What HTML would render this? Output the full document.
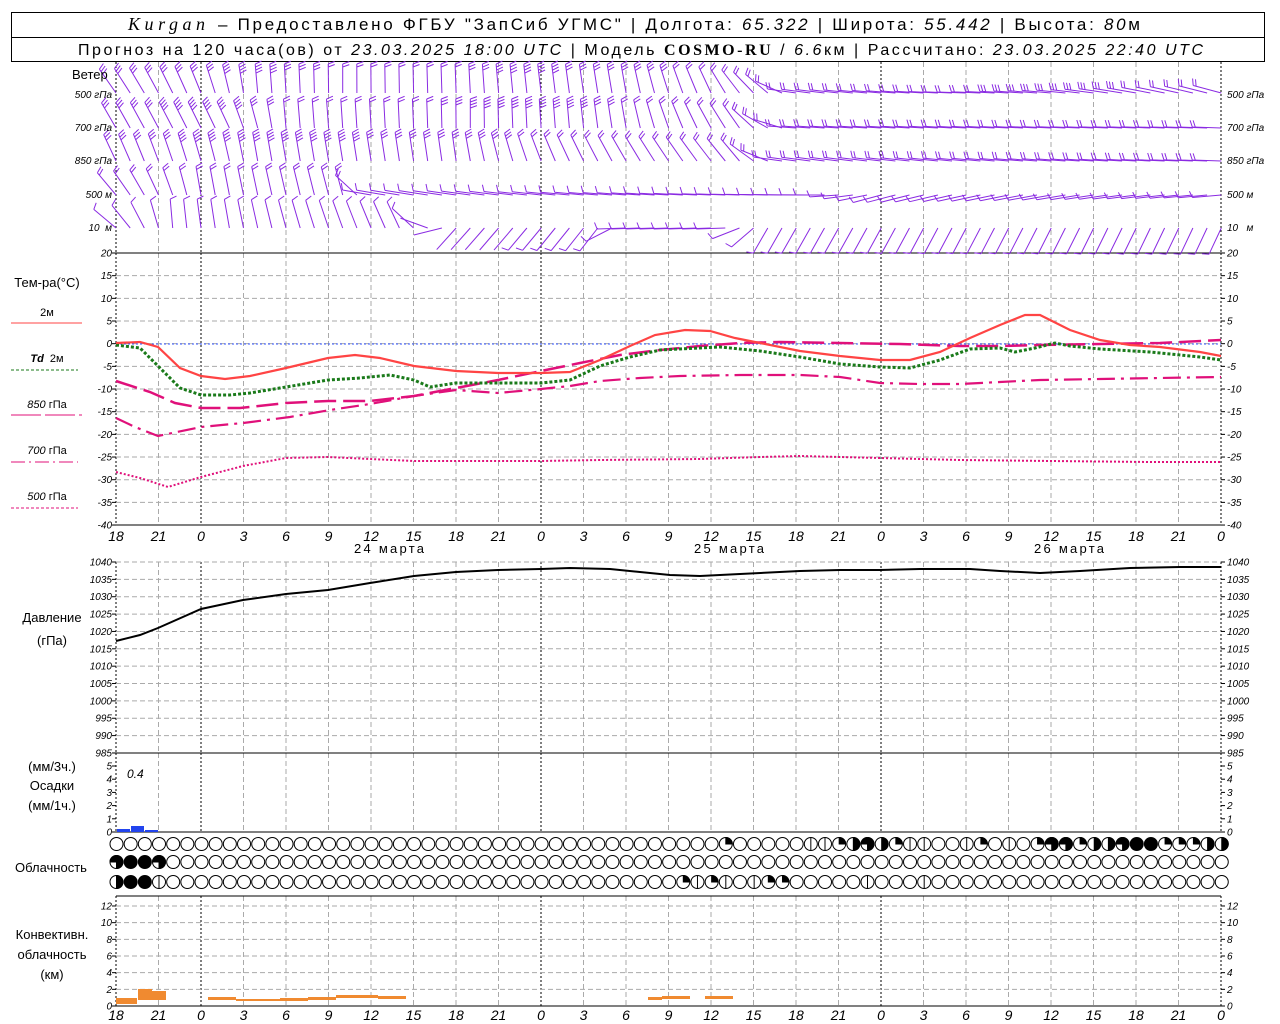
<!DOCTYPE html>
<html><head><meta charset="utf-8"><style>
html,body{margin:0;padding:0;background:#fff;width:1280px;height:1024px;overflow:hidden}
svg{display:block}
text{font-family:"Liberation Sans","DejaVu Sans",sans-serif;fill:#000}
.t{font-size:10px;font-style:italic}
.l{font-size:13px}
</style></head><body>
<svg id="s" width="1280" height="1024" viewBox="0 0 1280 1024" xmlns="http://www.w3.org/2000/svg">
<rect x="11.5" y="12.5" width="1253" height="49" fill="none" stroke="#000"/>
<line x1="11" y1="37.5" x2="1265" y2="37.5" stroke="#000"/>
<text x="128" y="30" style="font-size:18px;font-family:'Liberation Serif',serif;font-style:italic" textLength="77" lengthAdjust="spacing">Kurgan</text>
<text x="218" y="30" style="font-size:17px" textLength="922" lengthAdjust="spacing">– Предоставлено ФГБУ "ЗапСиб УГМС" | Долгота: <tspan font-style="italic">65.322</tspan> | Широта: <tspan font-style="italic">55.442</tspan> | Высота: <tspan font-style="italic">80</tspan>м</text>
<text x="78" y="55" style="font-size:16px" textLength="1125" lengthAdjust="spacing">Прогноз на 120 часа(ов) от <tspan font-style="italic">23.03.2025 18:00 UTC</tspan>  | Модель <tspan style="font-family:'Liberation Serif',serif;font-weight:bold">COSMO-RU</tspan> / <tspan font-style="italic">6.6</tspan>км | Рассчитано: <tspan font-style="italic">23.03.2025 22:40 UTC</tspan></text>
<g id="grid"></g>
<g id="wind" stroke="#8a2be2" stroke-width="1" fill="none"></g>
<text x="72" y="79" class="l">Ветер</text>
<g>
<text x="112" y="98" text-anchor="end" class="t">500 гПа</text>
<text x="112" y="131" text-anchor="end" class="t">700 гПа</text>
<text x="112" y="164" text-anchor="end" class="t">850 гПа</text>
<text x="112" y="198" text-anchor="end" class="t">500 м</text>
<text x="112" y="231" text-anchor="end" class="t">10 &#160;м</text>
<text x="1227" y="98" class="t">500 гПа</text>
<text x="1227" y="131" class="t">700 гПа</text>
<text x="1227" y="164" class="t">850 гПа</text>
<text x="1227" y="198" class="t">500 м</text>
<text x="1227" y="231" class="t">10 &#160; м</text>
</g>
<text x="47" y="287" class="l" text-anchor="middle">Тем-ра(°C)</text>
<text x="47" y="316" class="t" text-anchor="middle" style="font-style:normal;font-size:11px">2м</text>
<line x1="11" y1="323" x2="82" y2="323" stroke="#f44"/>
<text x="47" y="362" class="t" text-anchor="middle" style="font-size:11px"><tspan font-weight="bold">Td</tspan> <tspan font-style="normal">&#160;2м</tspan></text>
<line x1="11" y1="370" x2="78" y2="370" stroke="#1a7a1a" stroke-dasharray="3,2"/>
<text x="47" y="408" class="t" text-anchor="middle" style="font-size:11px">850 <tspan font-style="normal">гПа</tspan></text>
<line x1="11" y1="415" x2="82" y2="415" stroke="#e0107a" stroke-dasharray="30,4"/>
<text x="47" y="454" class="t" text-anchor="middle" style="font-size:11px">700 <tspan font-style="normal">гПа</tspan></text>
<line x1="11" y1="462" x2="78" y2="462" stroke="#e0107a" stroke-dasharray="14,4,2,4"/>
<text x="47" y="500" class="t" text-anchor="middle" style="font-size:11px">500 <tspan font-style="normal">гПа</tspan></text>
<line x1="11" y1="508" x2="78" y2="508" stroke="#e0107a" stroke-dasharray="3,2"/>
<text x="52" y="622" class="l" text-anchor="middle">Давление</text>
<text x="52" y="645" class="l" text-anchor="middle">(гПа)</text>
<text x="52" y="771" class="l" text-anchor="middle">(мм/3ч.)</text>
<text x="52" y="790" class="l" text-anchor="middle">Осадки</text>
<text x="52" y="810" class="l" text-anchor="middle">(мм/1ч.)</text>
<text x="51" y="872" class="l" text-anchor="middle">Облачность</text>
<text x="52" y="939" class="l" text-anchor="middle">Конвективн.</text>
<text x="52" y="959" class="l" text-anchor="middle">облачность</text>
<text x="52" y="979" class="l" text-anchor="middle">(км)</text>
<text x="354" y="553" class="l" textLength="70" lengthAdjust="spacing">24 марта</text>
<text x="694" y="553" class="l" textLength="70" lengthAdjust="spacing">25 марта</text>
<text x="1034" y="553" class="l" textLength="70" lengthAdjust="spacing">26 марта</text>
<text x="127" y="778" class="t" style="font-size:12px">0.4</text>
<line x1="116" y1="344" x2="1221" y2="344" stroke="#3355ff" stroke-dasharray="2,2" stroke-width="1"/>
<g fill="none" stroke-width="2.2">
<polyline stroke="#e0107a" stroke-width="2" stroke-dasharray="2,2" points="116,472 140,478 168,487 201,477 243,466 286,458 328,457 370,459 414,461 456,461 541,461 600,460 700,459 760,457 800,456 880,458 960,460 1050,461 1150,462 1221,462"/>
<polyline stroke="#e0107a" stroke-width="2.2" stroke-dasharray="18,6,3,6" points="116,418 135,427 158,436 201,427 243,423 290,417 330,410 370,404 414,396 456,390 498,393 541,389 570,386 600,381 640,378 680,376 740,375 800,375 840,377 880,383 920,384 960,384 1000,382 1040,380 1100,379 1160,378 1221,377"/>
<polyline stroke="#e0107a" stroke-width="2.5" stroke-dasharray="22,7" points="116,381 150,392 175,403 201,408 240,408 286,403 328,401 370,401 414,396 456,388 498,380 541,371 580,363 620,355 660,350 700,346 740,343 780,342 840,343 900,344 960,346 1000,346 1040,345 1100,344 1160,343 1221,340"/>
<polyline stroke="#1a7a1a" stroke-width="3" stroke-dasharray="3,2" points="116,345 140,348 158,366 180,388 201,395 230,395 250,393 286,387 328,380 360,378 390,375 414,380 430,387 456,383 498,383 541,383 570,380 600,366 630,357 660,350 700,348 720,347 760,351 800,357 840,364 880,367 910,368 940,360 970,349 1000,348 1015,352 1035,348 1055,343 1070,346 1100,349 1150,352 1200,357 1221,360"/>
<polyline stroke="#f44" stroke-width="2.2" points="116,343 140,342 158,347 180,368 201,376 225,379 250,376 286,368 328,358 355,355 380,358 414,366 456,371 498,373 541,373 570,372 600,360 630,346 655,335 685,330 710,331 735,338 760,343 800,351 840,356 880,360 910,360 940,352 970,338 1000,325 1025,315 1040,315 1070,330 1100,340 1130,345 1160,347 1200,352 1221,356"/>
<polyline stroke="#000" stroke-width="2" points="116,641 140,635 158,628 201,609 243,600 286,594 328,590 370,583 414,576 456,572 498,570 541,569 570,568 610,569 640,572 670,575 700,576 740,574 800,571 840,570 880,570 920,569 970,569 1000,571 1040,573 1080,571 1130,568 1180,567 1221,567"/>
</g>
<g fill="#2244ee">
<rect x="117" y="829" width="13" height="3"/>
<rect x="131" y="826" width="13" height="6"/>
<rect x="145" y="830" width="13" height="2"/>
</g>
<g fill="#f08a30">
<rect x="116" y="998" width="21" height="6"/>
<rect x="138" y="989" width="14" height="11"/>
<rect x="152" y="991" width="14" height="9"/>
<rect x="208" y="997" width="28" height="3"/>
<rect x="236" y="999" width="44" height="2"/>
<rect x="280" y="998" width="28" height="3"/>
<rect x="308" y="997" width="28" height="3"/>
<rect x="336" y="995" width="42" height="3"/>
<rect x="378" y="996" width="28" height="3"/>
<rect x="648" y="997" width="14" height="3"/>
<rect x="662" y="996" width="28" height="3"/>
<rect x="705" y="996" width="28" height="3"/>
</g>
<g id="clouds" stroke="#000" stroke-width="1"></g>
</svg>
<script>
var NS="http://www.w3.org/2000/svg",S=document.getElementById('s');
function el(p,t,a,txt){var e=document.createElementNS(NS,t);for(var k in a)e.setAttribute(k,a[k]);if(txt!==undefined)e.textContent=txt;p.appendChild(e);return e;}
var G=document.getElementById('grid');
var X0=116,X1=1221,DX=42.5;
for(var k=0;k<=26;k++){var x=X0+k*DX;var blk=(k==2||k==10||k==18||k==0||k==26);
 var segs=[[62,253],[253,525],[562,753],[753,832],[896,1006]];
 segs.forEach(function(s){el(G,'line',{x1:x,y1:s[0],x2:x,y2:s[1],stroke:blk?'#000':'#aaa','stroke-dasharray':blk?'2,2':'5,3','stroke-width':1});});
}
function hgrid(y){el(G,'line',{x1:X0,y1:y,x2:X1,y2:y,stroke:'#aaa','stroke-dasharray':'5,3'});}
for(var i=1;i<12;i++)hgrid(253+i*22.67);
for(var i=0;i<11;i++)hgrid(562+i*17.36);
for(var i=1;i<7;i++)hgrid(1006-i*16.67);
[[113,253,1221,253],[113,525,1221,525],[113,753,1221,753],[116,832,1221,832],[116,896,1221,896],[116,1006,1221,1006]].forEach(function(l){el(G,'line',{x1:l[0],y1:l[1],x2:l[2],y2:l[3],stroke:'#000'});});
function tick(y,t){el(S,'text',{x:112,y:y+3.5,'text-anchor':'end','class':'t'},t);el(S,'text',{x:1227,y:y+3.5,'class':'t'},t);
 el(G,'line',{x1:112,y1:y,x2:116,y2:y,stroke:'#000'});el(G,'line',{x1:1221,y1:y,x2:1225,y2:y,stroke:'#000'});}
for(var i=0;i<=12;i++)tick(253+i*22.67,String(20-5*i));
for(var i=0;i<=11;i++)tick(562+i*17.36,String(1040-5*i));
for(var i=0;i<=5;i++)tick(832-i*13.2,String(i));
for(var i=0;i<=6;i++)tick(1006-i*16.67,String(2*i));
var hrs=[18,21,0,3,6,9,12,15];
for(var k=0;k<=26;k++){var lab=String(hrs[k%8]);
 el(S,'text',{x:X0+k*DX,y:541,'text-anchor':'middle','class':'t',style:'font-size:14px;font-style:italic'},lab);
 el(S,'text',{x:X0+k*DX,y:1020,'text-anchor':'middle','class':'t',style:'font-size:14px;font-style:italic'},lab);}
var W=document.getElementById('wind');
var L=[
 {y:93,kp:[[0,125,3],[6,112,3],[10,95,4],[16,90,2],[24,92,2],[27,95,4],[36,100,3],[42,115,2],[46,140,2],[48,172,2],[60,178,2],[66,175,3],[78,165,2]]},
 {y:128,kp:[[0,120,3],[8,115,4],[12,95,2],[22,92,2],[25,90,4],[32,95,4],[36,100,2],[44,125,2],[48,176,2],[78,178,2]]},
 {y:161,kp:[[0,115,3],[10,100,4],[24,98,3],[32,115,2],[44,130,2],[47,172,2],[78,178,2]]},
 {y:195,kp:[[0,130,2],[6,100,2],[16,105,2],[18,170,1],[50,180,1],[54,195,1],[78,185,1]]},
 {y:228,kp:[[0,140,1],[4,95,1],[20,115,1],[22,160,0],[24,228,0],[34,232,1],[36,182,1],[43,182,1],[46,240,1],[78,245,1]]}
];
function interp(kp,h){for(var i=0;i<kp.length-1;i++){if(h<=kp[i+1][0]){var a=kp[i],b=kp[i+1],t=(h-a[0])/(b[0]-a[0]);return [a[1]+(b[1]-a[1])*t,Math.round(a[2]+(b[2]-a[2])*t)];}}return [kp[kp.length-1][1],kp[kp.length-1][2]];}
L.forEach(function(lv){for(var h=0;h<=78;h++){var v=interp(lv.kp,h),th=v[0]*Math.PI/180,n=v[1];
 var x=X0+h*14.17,y=lv.y,len=29,ux=Math.cos(th),uy=-Math.sin(th);
 var d='M'+x.toFixed(1)+','+y+'l'+(ux*len).toFixed(1)+','+(uy*len).toFixed(1);
 var fa=th-70*Math.PI/180,fx=Math.cos(fa)*7,fy=-Math.sin(fa)*7;
 for(var j=0;j<n;j++){var px=x+ux*(len-j*3),py=y+uy*(len-j*3);d+='M'+px.toFixed(1)+','+py.toFixed(1)+'l'+fx.toFixed(1)+','+fy.toFixed(1);}
 el(W,'path',{d:d});}});
var C=document.getElementById('clouds');
var rows=[844,862,882];
var st=[{},{0:4,1:5,2:5,3:4},{0:3,1:5,2:5,3:1}];
function mark(r,x,c){st[r][Math.round((x-116)/14.17)]=c;}
[[726,2],[812,1],[826,1],[841,2],[855,3],[870,4],[884,3],[898,2],[910,1],[925,1],[968,1],[982,2],[1011,1],[1040,2],[1054,4],[1068,4],[1083,2],[1097,3],[1111,3],[1126,4],[1140,5],[1152,5],[1167,2],[1181,2],[1195,2],[1210,3],[1224,3]].forEach(function(p){mark(0,p[0],p[1]);});
[[683,2],[697,1],[712,2],[726,1],[755,1],[769,2],[783,2],[868,1],[925,1]].forEach(function(p){mark(2,p[0],p[1]);});
for(var r=0;r<3;r++)for(var i=0;i<=78;i++){var cx=116.5+i*14.17,cy=rows[r],R=6.5,c=st[r][i]||0;
 el(C,'circle',{cx:cx,cy:cy,r:R,fill:c==5?'#000':'#fff'});
 if(c==1)el(C,'line',{x1:cx,y1:cy-R,x2:cx,y2:cy+R});
 if(c==2)el(C,'path',{d:'M'+cx+','+cy+'V'+(cy-R)+'A'+R+','+R+' 0 0 1 '+(cx+R)+','+cy+'Z',fill:'#000'});
 if(c==3)el(C,'path',{d:'M'+cx+','+(cy-R)+'A'+R+','+R+' 0 0 1 '+cx+','+(cy+R)+'Z',fill:'#000'});
 if(c==4)el(C,'path',{d:'M'+cx+','+cy+'H'+(cx-R)+'A'+R+','+R+' 0 1 1 '+cx+','+(cy+R)+'Z',fill:'#000'});
}
</script>
</body></html>
